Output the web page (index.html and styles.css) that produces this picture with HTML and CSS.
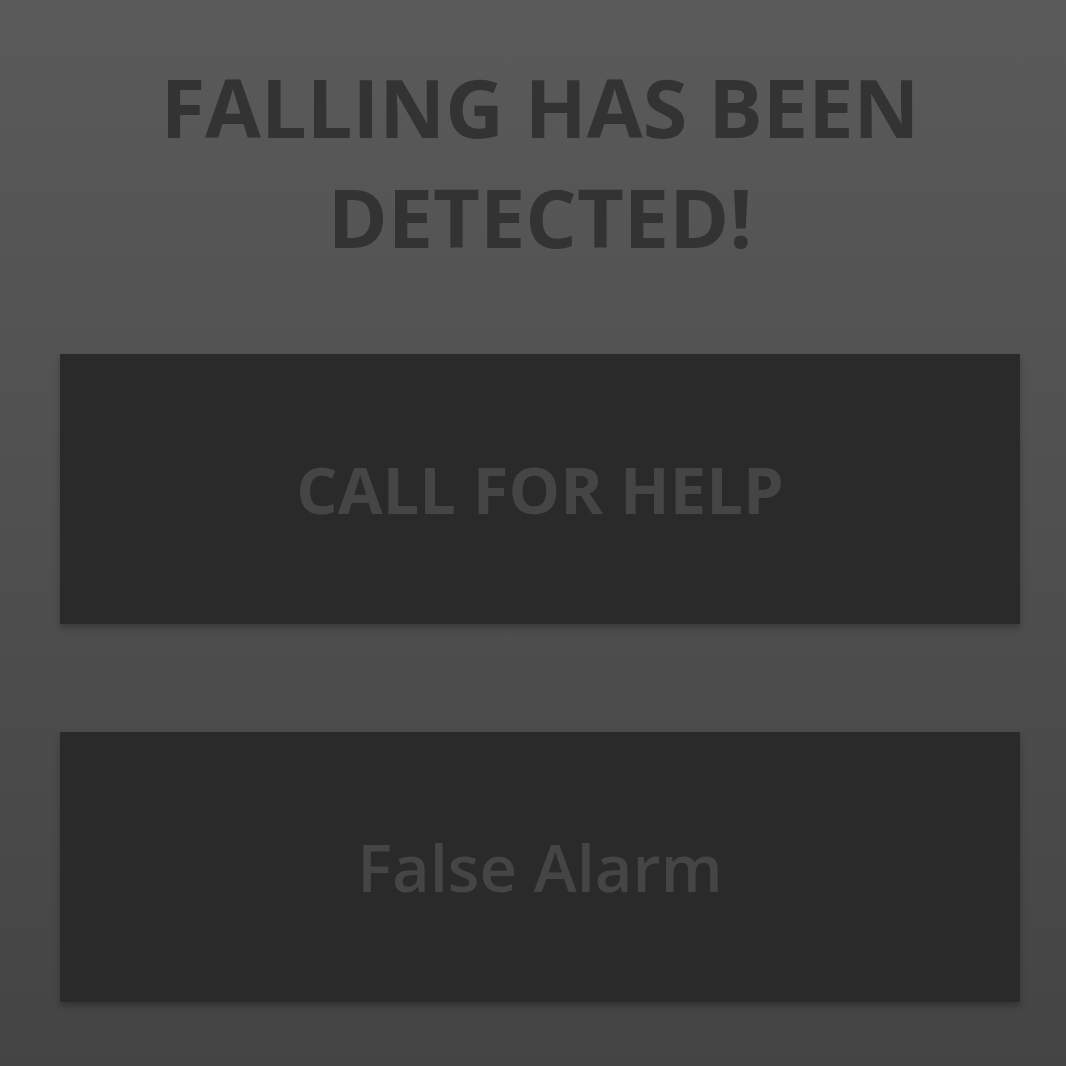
FILE: index.html
```html
<!DOCTYPE html>
<html>
<head>
<meta charset="utf-8">
<link rel="stylesheet" href="styles.css">
</head>
<body>
<main class="screen">
  <h1 class="title">FALLING HAS BEEN<br>DETECTED!</h1>
  <button class="btn btn-help">CALL FOR HELP</button>
  <button class="btn btn-false">False Alarm</button>
</main>
</body>
</html>
```

FILE: styles.css
```css
html, body {
  margin: 0;
  padding: 0;
  height: 100%;
}
body {
  background: linear-gradient(to bottom, #5a5a5a 0%, #444444 100%);
  font-family: "Open Sans", "Liberation Sans", sans-serif;
}
.screen {
  display: flex;
  flex-direction: column;
  align-items: center;
  padding: 52px 46px 0 60px;
  height: 1066px;
  box-sizing: border-box;
}
.title {
  margin: 0;
  font-size: 81px;
  font-weight: 700;
  line-height: 110px;
  color: #333333;
  text-align: center;
}
.btn {
  width: 960px;
  height: 270px;
  border: none;
  background: #2a2a2a;
  box-shadow: 0 4px 6px rgba(0,0,0,0.25);
  font-family: "Open Sans", "Liberation Sans", sans-serif;
  color: #454545;
  cursor: pointer;
  display: flex;
  align-items: center;
  justify-content: center;
  padding: 0;
}
.btn-help {
  margin-top: 82px;
  font-size: 65px;
  font-weight: 700;
}
.btn-false {
  margin-top: 108px;
  font-size: 65px;
  font-weight: 600;
}
```
